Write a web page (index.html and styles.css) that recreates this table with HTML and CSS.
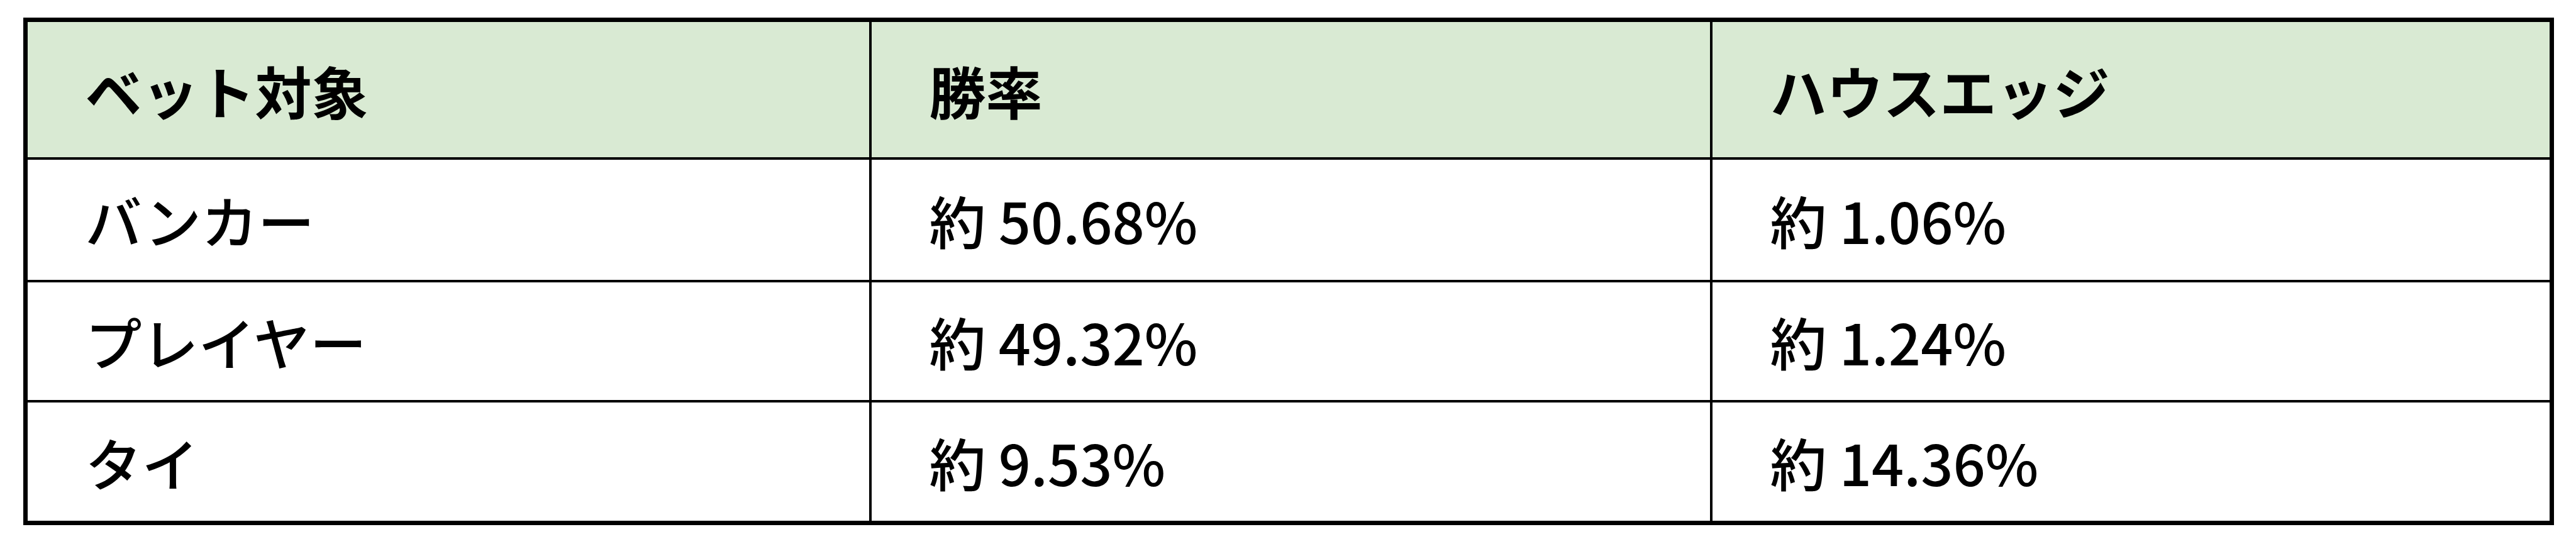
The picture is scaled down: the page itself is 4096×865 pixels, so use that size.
FILE: index.html
```html
<!DOCTYPE html>
<html lang="ja">
<head>
<meta charset="utf-8">
<link rel="stylesheet" href="styles.css">
<title>バカラ 勝率とハウスエッジ</title>
</head>
<body>
<div class="wrap">
  <table class="odds">
    <colgroup><col class="c1"><col class="c2"><col class="c3"></colgroup>
    <thead>
      <tr class="head">
        <th>ベット対象</th>
        <th>勝率</th>
        <th>ハウスエッジ</th>
      </tr>
    </thead>
    <tbody>
      <tr class="r1">
        <td>バンカー</td>
        <td>約 50.68%</td>
        <td>約 1.06%</td>
      </tr>
      <tr class="r2">
        <td>プレイヤー</td>
        <td>約 49.32%</td>
        <td>約 1.24%</td>
      </tr>
      <tr class="r3">
        <td>タイ</td>
        <td>約 9.53%</td>
        <td>約 14.36%</td>
      </tr>
    </tbody>
  </table>
</div>
</body>
</html>
```
FILE: styles.css
```css
html, body {
  margin: 0;
  padding: 0;
  background: #ffffff;
}
.wrap {
  padding: 28px 0 0 36.5px;
}
.odds {
  width: 4024px;
  table-layout: fixed;
  border-collapse: separate;
  border-spacing: 0;
  border: 7.5px solid #000;
  font-family: "Noto Sans CJK JP", "Noto Sans", sans-serif;
  font-size: 90px;
  color: #000;
}
.c1 { width: 1342px; }
.c2 { width: 1337px; }
.odds th,
.odds td {
  box-sizing: border-box;
  padding: 0 20px 0 92px;
  text-align: left;
  vertical-align: middle;
  line-height: 1.2;
  white-space: nowrap;
  border-right: 4px solid #000;
  border-bottom: 4px solid #000;
}
.odds th:last-child,
.odds td:last-child {
  border-right: none;
}
.odds tr.r3 td {
  border-bottom: none;
}
.odds th {
  font-weight: 700;
  background: #d9ead3;
  height: 219px;
}
.odds td {
  font-weight: 500;
}
.r1 td { height: 194.5px; }
.r2 td { height: 191.5px; }
.r3 td { height: 188px; }
```
